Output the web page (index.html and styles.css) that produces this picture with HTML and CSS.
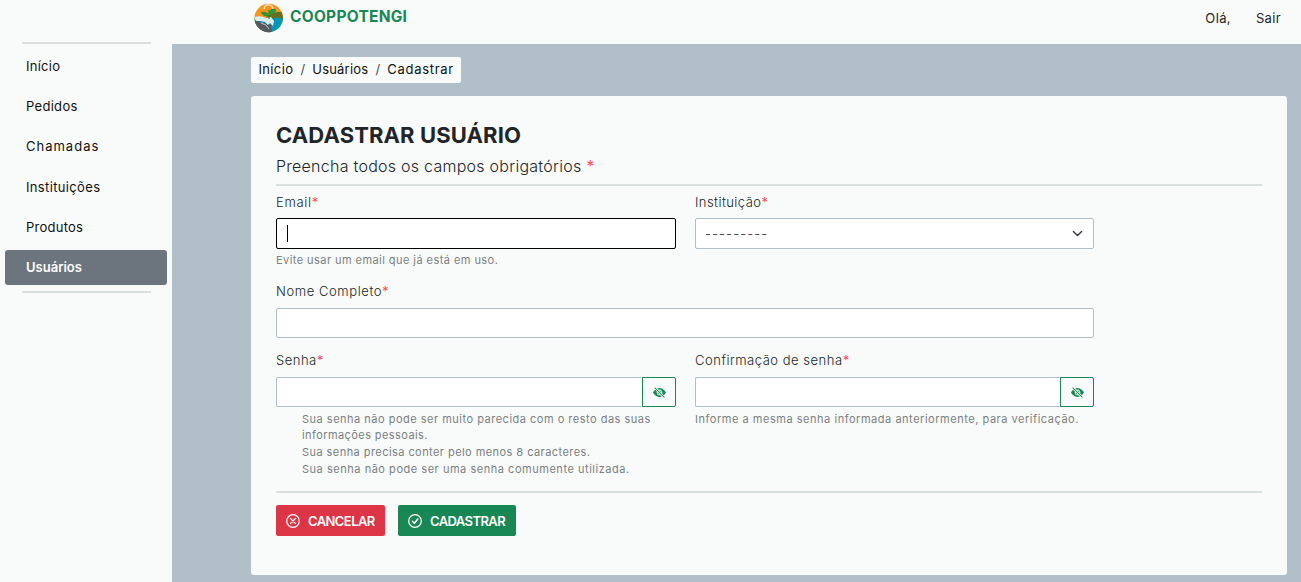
FILE: index.html
```html
<!DOCTYPE html>
<html lang="pt-br">
<head>
<meta charset="utf-8">
<title>Cadastrar Usuário</title>
<link rel="stylesheet" href="styles.css">
</head>
<body>
<svg class="defs" width="0" height="0" aria-hidden="true">
  <symbol id="eye-slash" viewBox="0 0 16 16"><path d="m10.79 12.912-1.614-1.615a3.5 3.5 0 0 1-4.474-4.474l-2.06-2.06C.938 6.278 0 8 0 8s3 5.5 8 5.5a7 7 0 0 0 2.79-.588M5.21 3.088A7 7 0 0 1 8 2.5c5 0 8 5.5 8 5.5s-.939 1.721-2.641 3.238l-2.062-2.062a3.5 3.5 0 0 0-4.474-4.474z"/><path d="M5.525 7.646a2.5 2.5 0 0 0 2.829 2.829zm4.95.708-2.829-2.83a2.5 2.5 0 0 1 2.829 2.829zm3.171 6-12-12 .708-.708 12 12z"/></symbol>
</svg>
<div class="app">
  <aside class="sidebar">
    <hr class="side-rule">
    <nav class="menu">
      <a class="item"><span class="n1">Início</span></a>
      <a class="item"><span class="n2">Pedidos</span></a>
      <a class="item"><span class="n3">Chamadas</span></a>
      <a class="item"><span class="n4">Instituições</span></a>
      <a class="item"><span class="n5">Produtos</span></a>
      <a class="item active"><span class="n6">Usuários</span></a>
    </nav>
    <hr class="side-rule">
  </aside>
  <div class="page">
    <header class="topbar">
      <div class="brand">
        <svg class="logo" viewBox="0 0 30 30">
          <clipPath id="disc"><circle cx="14.7" cy="15" r="14.2"/></clipPath>
          <g clip-path="url(#disc)">
            <rect width="30" height="30" fill="#f7941e"/>
            <path d="M0 14Q7 13 12 16L30 13V30H0Z" fill="#0097b8"/>
            <path d="M0 17Q5 17 7 20Q12 19 17 22L18 30H0Z" fill="#555a5e"/>
            <path d="M12 14Q20 8 30 9V17Q24 12 15 17Z" fill="#66701a"/>
            <path d="M0 14Q7 12 12 15L17 14L20 18L19 23L16 20L14 22L11 19L6 18L2 18Z" fill="#dcebee"/>
            <path d="M7 20L12 22L15 26" fill="none" stroke="#b9c7ca" stroke-width="1"/>
            <path d="M10 6Q11 1 15 2Q19 2 19 7" fill="none" stroke="#f8ddb5" stroke-width="1.5"/>
            <path d="M15 13Q8 14 7 9Q14 8 15 13ZM15 11Q15 5 22 6Q22 12 15 11Z" fill="#24983d"/>
            <path d="M15 7V16" stroke="#207c37" stroke-width="1"/>
          </g>
        </svg>
        <span class="brand-name">COOPPOTENGI</span>
      </div>
      <div class="user"><span class="hello">Olá,</span><a class="exit">Sair</a></div>
    </header>
    <main class="content">
      <div class="crumbs"><a class="c1">Início</a><i>/</i><a class="c2">Usuários</a><i>/</i><span class="c3">Cadastrar</span></div>
      <section class="card">
        <h1><span class="title">CADASTRAR USUÁRIO</span></h1>
        <p class="lead"><span class="lead-text">Preencha todos os campos obrigatórios <b>*</b></span></p>
        <hr class="rule">
        <form class="form">
          <div class="field f-email">
            <label><span class="l1">Email</span><b>*</b></label>
            <div class="control focused"><span class="caret"></span></div>
            <p class="help email-help"><span class="h1">Evite usar um email que já está em uso.</span></p>
          </div>
          <div class="field">
            <label><span class="l2">Instituição</span><b>*</b></label>
            <div class="control select"><span class="dashes">---------</span>
              <svg width="11" height="11" viewBox="0 0 16 16"><path d="m2 5 6 6 6-6" fill="none" stroke="#343a40" stroke-width="2" stroke-linecap="round" stroke-linejoin="round"/></svg></div>
          </div>
          <div class="field wide up">
            <label><span class="l3">Nome Completo</span><b>*</b></label>
            <div class="control"></div>
          </div>
          <div class="field up">
            <label><span class="l4">Senha</span><b>*</b></label>
            <div class="group"><div class="control"></div><button type="button" class="eye"><svg width="13" height="13"><use href="#eye-slash"/></svg></button></div>
            <ul class="help rules">
              <li><span class="r1">Sua senha não pode ser muito parecida com o resto das suas</span><br><span class="r2">informações pessoais.</span></li>
              <li><span class="r3">Sua senha precisa conter pelo menos 8 caracteres.</span></li>
              <li><span class="r4">Sua senha não pode ser uma senha comumente utilizada.</span></li>
            </ul>
          </div>
          <div class="field up">
            <label><span class="l5">Confirmação de senha</span><b>*</b></label>
            <div class="group"><div class="control"></div><button type="button" class="eye"><svg width="13" height="13"><use href="#eye-slash"/></svg></button></div>
            <p class="help"><span class="h2">Informe a mesma senha informada anteriormente, para verificação.</span></p>
          </div>
        </form>
        <hr class="rule bottom">
        <div class="actions">
          <button class="btn danger"><svg width="14" height="14" viewBox="0 0 16 16" fill="none" stroke="currentColor" stroke-width="1.4" stroke-linecap="round"><circle cx="8" cy="8" r="7.2"/><path d="m5.2 5.2 5.6 5.6m0-5.6-5.6 5.6"/></svg><span class="b1">CANCELAR</span></button>
          <button class="btn success"><svg width="14" height="14" viewBox="0 0 16 16" fill="none" stroke="currentColor" stroke-width="1.4" stroke-linecap="round" stroke-linejoin="round"><circle cx="8" cy="8" r="7.2"/><path d="m5 8.3 2.2 2.2 4-4.8" stroke-width="1.8"/></svg><span class="b2">CADASTRAR</span></button>
        </div>
      </section>
    </main>
  </div>
</div>
</body>
</html>
```
FILE: styles.css
```css
* { box-sizing: border-box; }
body { margin: 0; font-family: Inter, "Open Sans", sans-serif; font-size: 13px; color: #212529; background: #b0bfc8; overflow: hidden; }
hr, p, ul, h1 { margin: 0; padding: 0; }
hr { border: 0; height: 2px; background: #d9e0df; }
span { white-space: nowrap; }
.defs { position: absolute; }
.app { display: flex; height: 582px; }

.sidebar { width: 172px; flex: none; background: #f9fbfa; padding-top: 42px; }
.side-rule { width: 129px; margin-left: 22px; }
.menu { display: flex; flex-direction: column; gap: 5.2px; padding: 5px 5px 6px; }
.item { height: 35px; display: flex; align-items: center; padding: 0 0 1px 21px; border-radius: 3px; color: #111; }
.item.active { background: #6c757d; color: #fff; font-weight: 600; padding-bottom: 0; }
.n1 { letter-spacing: .25px; }
.n2 { letter-spacing: .3px; }
.n3 { letter-spacing: 1px; }
.n4 { letter-spacing: .35px; }
.n5 { letter-spacing: .25px; }

.page { flex: 1; }
.topbar { height: 44px; background: #f9fbfa; display: flex; justify-content: space-between; padding: 3px 20px 0 82px; }
.brand { display: flex; align-items: flex-start; gap: 6px; }
.logo { width: 30px; height: 30px; }
.brand-name { font-size: 15.5px; font-weight: 700; color: #198754; line-height: 28px; letter-spacing: .25px; }
.user { display: flex; gap: 25px; line-height: 31px; letter-spacing: .35px; }

.content { padding: 13px 14px 0 79px; }
.crumbs { width: 210px; height: 26px; background: #f9fbfa; border-radius: 2px; display: flex; align-items: center; padding: 0 0 2px 7.5px; color: #111; }
.crumbs i { font-style: normal; width: 19px; text-align: center; color: #495057; }
.c1 { letter-spacing: .35px; }
.c2 { letter-spacing: .2px; }
.c3 { letter-spacing: .7px; }
.card { margin-top: 13px; height: 479px; background: #f9fbfa; border-radius: 3px; padding: 25px; }
h1 { font-size: 22px; font-weight: 700; line-height: 28px; height: 30px; letter-spacing: .12px; }
.lead { font-size: 16px; font-weight: 300; line-height: 30px; height: 33px; letter-spacing: .26px; }
b { font-weight: 400; color: #ff4f57; }

.form { display: grid; width: 818px; grid-template-columns: 400px 399px; column-gap: 19px; grid-template-rows: 90px 69px 146px; }
.wide { grid-column: 1 / 3; }
label { display: block; font-weight: 300; line-height: 18px; height: 32px; padding-top: 7px; }
.up label { padding-top: 6px; }
.l1 { letter-spacing: .7px; }
.l2 { letter-spacing: .45px; }
.l3 { letter-spacing: .58px; }
.l4 { letter-spacing: .5px; }
.l5 { letter-spacing: .52px; }
.control { height: 30px; background: #fff; border: 1px solid #b0bfc8; border-radius: 2px; flex: 1; }
.focused, .select { height: 31px; }
.focused { border-color: #000; padding: 6px 10px; }
.caret { display: block; width: 1px; height: 17px; background: #000; }
.select { display: flex; align-items: center; justify-content: space-between; padding: 0 10px 0 9px; }
.dashes { letter-spacing: 1.15px; font-weight: 300; }
.group { display: flex; }
.group .control { border-radius: 2px 0 0 2px; border-right: 0; }
.eye { width: 34px; height: 30px; padding: 0; border: 1px solid #198754; border-radius: 0 2px 2px 0; background: #f9fbfa; display: grid; place-items: center; }
.eye svg { fill: #198754; }
.help { font-size: 11px; font-weight: 400; color: #7b8081; line-height: 16px; padding-top: 4px; }
.email-help { padding-top: 3px; }
.rules { list-style: none; padding-left: 26px; }
.rules li + li { margin-top: 1px; }
.help .h1 { letter-spacing: .44px; }
.help .h2 { letter-spacing: .53px; }
.r1 { letter-spacing: .5px; }
.r2 { letter-spacing: .42px; }
.r3 { letter-spacing: .44px; }
.r4 { letter-spacing: .53px; }

.actions { display: flex; gap: 13px; margin-top: 12px; }
.btn { height: 31px; border: 0; border-radius: 2px; color: #fff; font: 600 13px Inter, sans-serif; display: flex; align-items: center; gap: 8px; padding: 0 0 0 10px; letter-spacing: -.58px; }
.btn svg { flex: none; }
.danger { background: #dc3545; width: 109px; }
.success { background: #198754; width: 118px; }
```
